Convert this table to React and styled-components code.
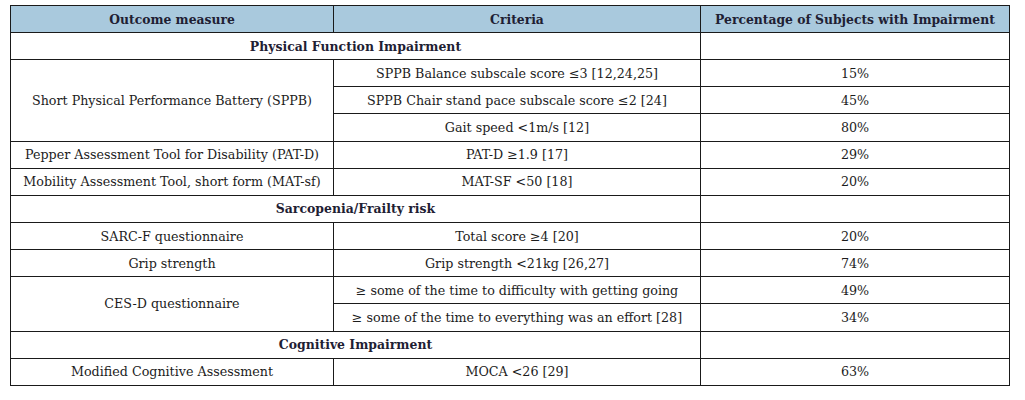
import React from "react";
import styled, { createGlobalStyle } from "styled-components";

const Global = createGlobalStyle`
  html, body { margin: 0; padding: 0; background: #ffffff; }
  body { font-family: "DejaVu Serif", "Liberation Serif", serif; }
`;

const Page = styled.div`
  padding: 5px 0 0 10px;
`;

const Table = styled.table`
  width: 999px;
  border-collapse: collapse;
  table-layout: fixed;
  font-family: "DejaVu Serif", "Liberation Serif", serif;
  font-size: 12.7px;
  color: #1c1c1c;
`;

const Th = styled.th`
  background: #a9c9dd;
  border: 1px solid #1a1a1a;
  height: 26px;
  padding: 0 4px;
  font-weight: bold;
  font-size: 12.35px;
  color: #1e2033;
  text-align: center;
  vertical-align: middle;
`;

const Td = styled.td`
  border: 1px solid #1a1a1a;
  height: 26.15px;
  padding: 0 4px;
  text-align: center;
  vertical-align: middle;
  font-weight: ${(p) => (p.$section ? "bold" : "normal")};
  font-size: ${(p) => (p.$section ? "12.45px" : "12.7px")};
  color: ${(p) => (p.$section ? "#1e2033" : "#1c1c1c")};
  white-space: nowrap;
`;

const rows = [
  { section: "Physical Function Impairment" },
  { measure: "Short Physical Performance Battery (SPPB)", span: 3, criteria: "SPPB Balance subscale score ≤3 [12,24,25]", pct: "15%" },
  { criteria: "SPPB Chair stand pace subscale score ≤2 [24]", pct: "45%" },
  { criteria: "Gait speed <1m/s [12]", pct: "80%" },
  { measure: "Pepper Assessment Tool for Disability (PAT-D)", criteria: "PAT-D ≥1.9 [17]", pct: "29%" },
  { measure: "Mobility Assessment Tool, short form (MAT-sf)", criteria: "MAT-SF <50 [18]", pct: "20%" },
  { section: "Sarcopenia/Frailty risk" },
  { measure: "SARC-F questionnaire", criteria: "Total score ≥4 [20]", pct: "20%" },
  { measure: "Grip strength", criteria: "Grip strength <21kg [26,27]", pct: "74%" },
  { measure: "CES-D questionnaire", span: 2, criteria: "≥ some of the time to difficulty with getting going", pct: "49%" },
  { criteria: "≥ some of the time to everything was an effort [28]", pct: "34%" },
  { section: "Cognitive Impairment" },
  { measure: "Modified Cognitive Assessment", criteria: "MOCA <26 [29]", pct: "63%" },
];

export default function App() {
  return (
    <>
      <Global />
      <Page>
        <Table>
          <colgroup>
            <col style={{ width: "323px" }} />
            <col style={{ width: "367px" }} />
            <col style={{ width: "309px" }} />
          </colgroup>
          <thead>
            <tr>
              <Th>Outcome measure</Th>
              <Th>Criteria</Th>
              <Th>Percentage of Subjects with Impairment</Th>
            </tr>
          </thead>
          <tbody>
            {rows.map((r, i) =>
              r.section ? (
                <tr key={i}>
                  <Td $section colSpan={2}>{r.section}</Td>
                  <Td />
                </tr>
              ) : (
                <tr key={i}>
                  {r.measure && <Td rowSpan={r.span || 1}>{r.measure}</Td>}
                  <Td>{r.criteria}</Td>
                  <Td>{r.pct}</Td>
                </tr>
              )
            )}
          </tbody>
        </Table>
      </Page>
    </>
  );
}
